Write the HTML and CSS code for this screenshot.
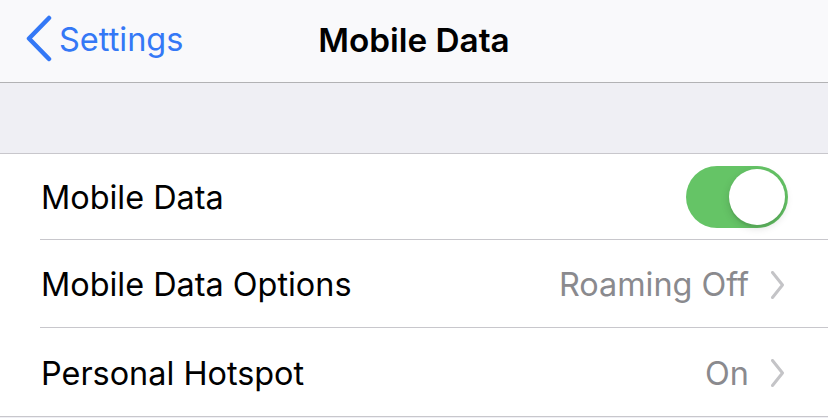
FILE: index.html
```html
<!DOCTYPE html>
<html>
<head lang="en">
    <meta charset="UTF-8">
    <title>Mobile Data</title>
    <link rel="stylesheet" href="styles.css">
</head>
<body>
<div class="navbar">
    <a class="back">
        <svg class="back-icon" width="30" height="48" viewBox="0 0 30 48">
            <path d="M25 3 L5 23.5 L25 44" fill="none" stroke="#3478f6" stroke-width="4.5" stroke-linecap="round" stroke-linejoin="round"/>
        </svg>
        <span>Settings</span>
    </a>
    <div class="title">Mobile Data</div>
</div>
<div class="gap"></div>
<ul class="list">
    <li class="row">
        <span class="label">Mobile Data</span>
        <span class="switch on"><em></em></span>
    </li>
    <li class="row">
        <span class="label">Mobile Data Options</span>
        <span class="value">Roaming Off</span>
        <svg class="chevron" width="13" height="28" viewBox="0 0 13 28">
            <path d="M1.5 1.5 L11.5 14 L1.5 26.5" fill="none" stroke="#c4c4c7" stroke-width="3" stroke-linecap="round" stroke-linejoin="round"/>
        </svg>
    </li>
    <li class="row">
        <span class="label">Personal Hotspot</span>
        <span class="value">On</span>
        <svg class="chevron" width="13" height="28" viewBox="0 0 13 28">
            <path d="M1.5 1.5 L11.5 14 L1.5 26.5" fill="none" stroke="#c4c4c7" stroke-width="3" stroke-linecap="round" stroke-linejoin="round"/>
        </svg>
    </li>
</ul>
</body>
</html>
```

FILE: styles.css
```css
body, div, ul, li, span, em, a {
    margin: 0;
    padding: 0;
    font-family: Inter, "Liberation Sans", sans-serif;
}

body {
    background: #efeff4;
    width: 828px;
    height: 418px;
    overflow: hidden;
}

ul, li {
    list-style: none;
}

.navbar {
    position: relative;
    display: flex;
    align-items: center;
    height: 78px;
    padding-bottom: 4px;
    background: #f9f9fb;
    border-bottom: 1px solid #b2b2b4;
}

.back {
    display: flex;
    align-items: center;
    gap: 5px;
    padding-left: 24px;
    color: #3478f6;
    font-size: 32.5px;
}

.title {
    position: absolute;
    left: 0;
    right: 0;
    top: 20px;
    text-align: center;
    font-size: 33.3px;
    font-weight: 600;
    color: #000;
    pointer-events: none;
}

.gap {
    height: 70px;
    border-bottom: 1px solid #c8c7cc;
}

.list {
    background: #fff;
}

.row {
    position: relative;
    display: flex;
    align-items: center;
    height: 86px;
    padding: 1px 44px 0 41px;
    box-sizing: border-box;
    font-size: 32.4px;
    color: #000;
}

.row:after {
    content: "";
    position: absolute;
    left: 40px;
    right: 0;
    bottom: 0;
    height: 1px;
    background: #c8c7cc;
}

.row:first-child {
    padding-top: 0;
}

.row + .row {
    height: 88px;
}

.row:last-child {
    height: 89px;
}

.row:last-child:after {
    left: 0;
}

.label {
    flex: 1;
}

.value {
    color: #8a8a8e;
    margin-right: 22px;
}

.chevron {
    display: block;
}

.row .switch {
    margin-right: -4px;
}

.switch {
    position: relative;
    display: block;
    width: 102px;
    height: 62px;
    border-radius: 31px;
    background: #65c466;
}

.switch em {
    position: absolute;
    top: 3px;
    right: 3px;
    width: 56px;
    height: 56px;
    border-radius: 50%;
    background: #fff;
    box-shadow: 0 3px 8px rgba(0, 0, 0, 0.15), 0 3px 1px rgba(0, 0, 0, 0.06);
}
```
